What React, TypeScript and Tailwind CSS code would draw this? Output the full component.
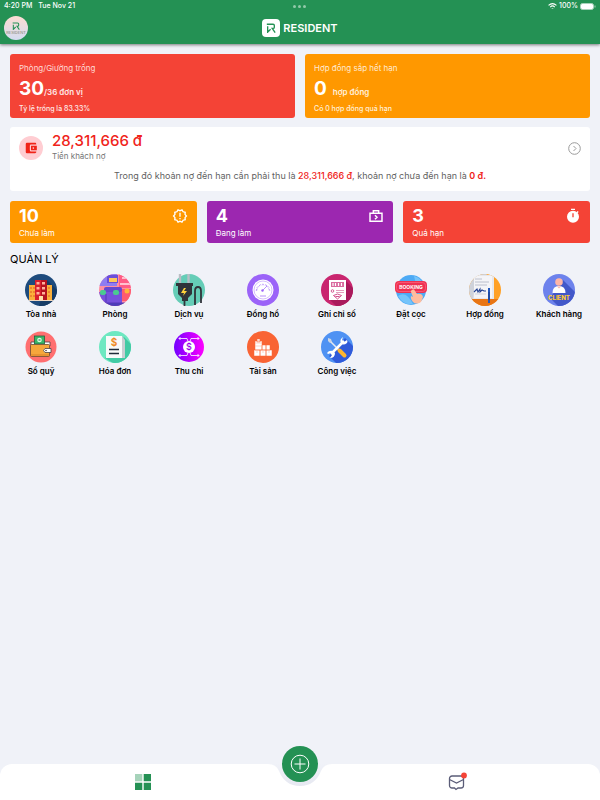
import React from "react";
import { MdAccountBalanceWallet, MdOutlineNewReleases } from "react-icons/md";

type IconProps = { children: React.ReactNode; bg: string; id: string };

const RoundIcon = ({ children, bg, id }: IconProps) => (
  <svg viewBox="0 0 32 32" className="h-8 w-8" aria-hidden="true">
    <defs>
      <clipPath id={id}>
        <circle cx="16" cy="16" r="16" />
      </clipPath>
    </defs>
    <g clipPath={`url(#${id})`}>
      <rect width="32" height="32" fill={bg} />
      {children}
    </g>
  </svg>
);

const BuildingIcon = () => (
  <RoundIcon id="building" bg="#1e4b7d">
    <path d="M22 6l10 10v16H14z" fill="#173c66" />
    <rect x="4" y="11" width="7" height="15" fill="#fbb03b" />
    <rect x="21" y="11" width="6" height="15" fill="#fbb03b" />
    <path d="M6 13v11M9 13v11M24 13v11" stroke="#e8792b" strokeWidth="1.500" strokeDasharray="2 2" />
    <rect x="10" y="6" width="6" height="20" fill="#d91e2e" />
    <rect x="16" y="6" width="6" height="20" fill="#b5121f" />
    <path d="M13 8v13M18.500 8v13" stroke="#ffb09a" strokeWidth="3" strokeDasharray="2.500 2.500" />
    <rect x="14" y="22" width="4" height="4" fill="#ffe0a8" />
    <path d="M3 26.500h26" stroke="#f3d9c0" />
  </RoundIcon>
);

const RoomIcon = () => (
  <RoundIcon id="room" bg="#ff8fa3">
    <path d="M0 0h18v12H0z" fill="#8f7df2" />
    <path d="M8 1h11v8H8z" fill="#6c4fd8" />
    <path d="M10 4h8v4h-8z" fill="#ffc85a" />
    <path d="M20 0h12v14H20z" fill="#ff5d86" />
    <path d="M23 4h7M21 10h10" stroke="#ffc2cf" strokeWidth="2" />
    <rect x="5" y="13" width="18" height="6" rx="2" fill="#6548cf" />
    <rect x="0" y="18" width="23" height="11" fill="#7751dd" />
    <rect x="1" y="16" width="6" height="5" rx="2" fill="#4acb91" />
    <rect x="14" y="16" width="6" height="5" rx="2" fill="#4acb91" />
    <path d="M0 29h32v3H0zM7 20v8" fill="#4b3fb8" stroke="#5638b7" />
    <path d="M23 15h9v12h-9z" fill="#ff5a70" />
    <circle cx="28" cy="17" r="2.500" fill="#ffb43c" />
  </RoundIcon>
);

const PlugIcon = () => (
  <svg viewBox="0 0 32 32" className="h-8 w-8" aria-hidden="true">
    <circle cx="16" cy="16" r="16" fill="#65cdb7" />
    <path d="M7 0v10M15.500 0v10" stroke="#b9bec5" strokeWidth="2.400" />
    <path d="M11.500 26v6M22 31V17q0-4 3-4t3 4v12" stroke="#30343a" strokeWidth="1.800" fill="none" />
    <path d="M3 9h17v3h-1v8l-4 4v3H9v-3l-4-4v-8H3z" fill="#30343a" />
    <path d="M11 14l-3 5h3l-1 3 4-5h-3l2-3z" fill="#ffd43b" />
  </svg>
);

const MeterIcon = () => (
  <RoundIcon id="meter" bg="#9b63f8">
    <circle cx="16" cy="16" r="10.500" fill="#fff" />
    <circle cx="16" cy="16" r="9" fill="none" stroke="#b892fa" strokeWidth="0.600" />
    <path d="M9.500 17a6.500 6.500 0 1 1 13 0" fill="none" stroke="#9b63f8" strokeWidth="1.400" strokeDasharray="0.500 1" />
    <path d="M15 17l5-5M13 22h6" stroke="#9b63f8" strokeWidth="0.700" />
    <circle cx="15.500" cy="16.500" r="1.200" fill="#9b63f8" />
  </RoundIcon>
);

const ReadingIcon = () => (
  <RoundIcon id="reading" bg="#c9256f">
    <path d="M24 6l8 8v18H15l-6-6z" fill="#a91a5c" />
    <rect x="8" y="6" width="17" height="20" fill="#fff" />
    <rect x="10" y="8" width="13" height="5" fill="#d96a9e" />
    <path d="M12 9v3M14.500 9v3M17.500 9v3M20.500 9v3" stroke="#fff" strokeWidth="1.200" />
    <circle cx="11.500" cy="17" r="1.300" fill="none" stroke="#c9256f" strokeWidth="0.700" />
    <path d="M15 16.500h8M15 18.500h8" stroke="#dd84ac" strokeWidth="0.800" />
    <path d="M12.500 21.500q4-3 8 0l-4 3.500zM14.500 22.500h4" fill="none" stroke="#c9256f" strokeWidth="0.800" />
  </RoundIcon>
);

const BookingIcon = () => (
  <svg viewBox="0 0 32 32" className="h-8 w-8" aria-hidden="true">
    <circle cx="16" cy="16" r="15" fill="#4daaf5" />
    <path d="M3 22q8-6 15 8-9 2-15-8M19 2q7 2 9 8h-7z" fill="#75c4fa" />
    <rect x="0" y="7" width="32" height="12" rx="4" fill="#ee3152" />
    <rect x="1.500" y="8.500" width="29" height="9" rx="3" fill="none" stroke="#ff7189" strokeWidth="0.600" />
    <text x="16" y="15" textAnchor="middle" fill="#fff" fontSize="5" fontWeight="700" fontFamily="Inter, sans-serif">BOOKING</text>
    <path d="M17 16q2-2 3 1l2 3q5-1 6 3l-2 5q-5 3-8 0-3-4-2-6l2 1-2-5q-1-1 1-2" fill="#ffbd9e" />
  </svg>
);

const ContractIcon = () => (
  <RoundIcon id="contract" bg="#ffa126">
    <path d="M0 0h18L5 25H0z" fill="#cfd2da" />
    <path d="M7 1h18v25H4z" fill="#e6e7ec" />
    <path d="M5 2h18v22H5z" fill="#f4f4f7" />
    <path d="M3 25h29v7H3z" fill="#e87515" />
    <path d="M6 5h7M6 8h14M6 11h12" stroke="#adb2c2" strokeWidth="0.800" />
    <path d="M5 18l3-3 1 3 2-3v3l2-2 2 1h2" fill="none" stroke="#244292" strokeWidth="1.100" />
    <path d="M6 20h11" stroke="#c0c3cd" strokeWidth="0.700" />
    <path d="M20 14v15" stroke="#2459bd" strokeWidth="2" />
    <path d="M20 18v8" stroke="#1a397f" strokeWidth="0.800" />
  </RoundIcon>
);

const ClientIcon = () => (
  <RoundIcon id="client" bg="#6d82ec">
    <path d="M20 6l12 12v14H15l-8-8z" fill="#4258c9" />
    <circle cx="16" cy="8" r="3.800" fill="#ffb5a6" />
    <path d="M9.500 19q0-7 6.500-7t6.500 7z" fill="#fff" />
    <path d="M14 12.500l2 2 2-2z" fill="#ffb5a6" />
    <text x="16" y="25.500" textAnchor="middle" fill="#ffcb32" fontSize="6" fontWeight="800" fontFamily="Inter, sans-serif">CLIENT</text>
  </RoundIcon>
);

const WalletIcon = () => (
  <svg viewBox="0 0 32 32" className="h-8 w-8" aria-hidden="true">
    <circle cx="16" cy="16" r="15.500" fill="#ff6f70" />
    <path d="M6 14v-3h19v4" fill="#fff" stroke="#484044" strokeWidth="0.800" />
    <rect x="9.500" y="5" width="10" height="8" fill="#3ab568" stroke="#265f3f" strokeWidth="0.800" />
    <circle cx="14.500" cy="9" r="2.300" fill="#d9ffe2" />
    <path d="M13.500 9h2" stroke="#265f3f" />
    <rect x="5.500" y="13.500" width="19" height="12" rx="1" fill="#f6a73b" stroke="#6d4b31" strokeWidth="0.800" />
    <path d="M6 24h18" stroke="#d97f27" />
    <path d="M26 17.500h-6q-3 2 0 4h6z" fill="#fff" stroke="#484044" strokeWidth="0.800" />
    <circle cx="21" cy="19.500" r="0.800" fill="#484044" />
  </svg>
);

const InvoiceIcon = () => (
  <RoundIcon id="invoice" bg="#6ee8c1">
    <path d="M25 6l7 7v19H14l-8-5z" fill="#42caa4" />
    <path d="M20 5h3l3 4v18h-6z" fill="#c9ced2" />
    <path d="M7 5h16v22H7z" fill="#f8fafa" />
    <text x="15" y="14.500" textAnchor="middle" fill="#ef8a26" fontSize="10" fontWeight="700" fontFamily="Inter, sans-serif">$</text>
    <path d="M10 18.500h10M10 22.500h10" stroke="#202b39" strokeWidth="1.300" />
  </RoundIcon>
);

const CashFlowIcon = () => (
  <svg viewBox="0 0 32 32" className="h-8 w-8" aria-hidden="true">
    <defs>
      <linearGradient id="cash">
        <stop stopColor="#7300ff" />
        <stop offset="1" stopColor="#ff00ff" />
      </linearGradient>
    </defs>
    <circle cx="16" cy="16" r="15" fill="url(#cash)" />
    <g fill="none" stroke="#fff" strokeWidth="0.800">
      <path d="M6 7.500h8l1 3M26 7.500h-8l-1 3M6 24.500h8l1-3M26 24.500h-8l-1-3M7.500 6L6 7.500 7.500 9M24.500 6L26 7.500 24.500 9M7.500 23L6 24.500 7.500 26M24.500 23l1.500 1.500-1.500 1.500" />
    </g>
    <circle cx="16" cy="16" r="6" fill="#fff" />
    <text x="16" y="19.200" textAnchor="middle" fill="#9200e6" fontSize="9" fontWeight="500" fontFamily="Inter, sans-serif">$</text>
  </svg>
);

const AssetIcon = () => (
  <RoundIcon id="asset" bg="#f96434">
    <g fill="#fff" stroke="#f96434" strokeWidth="0.500">
      <path d="M8 10h7v9H8zM7 19h6v6H7zM13 19h6v6h-6zM19 19h6v6h-6zM15 14h4v5h-4zM19 14h4v5h-4zM10 8h3v3h-3z" />
    </g>
    <path d="M8 12h7M8 15h7M10 20v2M16 20v2M22 20v2" stroke="#fbb59e" strokeWidth="0.600" />
  </RoundIcon>
);

const WorkIcon = () => (
  <RoundIcon id="work" bg="#4f92f3">
    <path d="M24 7l8 8v17H15l-7-7z" fill="#315bd9" />
    <path d="M8 9l11 11" stroke="#e4eaf2" strokeWidth="1.500" />
    <path d="M7 7l3 1 1 3-2 1-2-2z" fill="#cbd6e5" />
    <path d="M18.500 19.500l5 5" stroke="#ffb52f" strokeWidth="4" strokeLinecap="round" />
    <path d="M10 23l13-13" stroke="#fff" strokeWidth="2.500" />
    <path d="M22 6q-4 3-2 6t6 0q1-1 0-3l-3 2-2-2zM12 20q-4-1-6 2l1 1 3-1 1 2-2 3q5 0 5-5z" fill="#fff" />
  </RoundIcon>
);

const CaseIcon = () => (
  <svg viewBox="0 0 24 24" className="h-4 w-4" fill="none" stroke="currentColor" strokeWidth="2.200" aria-hidden="true">
    <path d="M3 8h18v12H3zM8 8V4h8v4M10.500 11l3 3-3 3" />
  </svg>
);

const TimerIcon = () => (
  <svg viewBox="0 0 24 24" className="h-4 w-4" fill="currentColor" aria-hidden="true">
    <path d="M9 1h6v2H9zM19 4.500l1.500 1.500-2 2L17 6.500z" />
    <path fillRule="evenodd" d="M12 4a9 9 0 1 0 0 18 9 9 0 0 0 0-18zm-1 4h2v6h-2z" />
  </svg>
);

const LogoMark = ({ className }: { className: string }) => (
  <svg viewBox="0 0 12 12" className={className} fill="none" stroke="currentColor" strokeWidth="1.600" aria-hidden="true">
    <path d="M1 1.500h7.500q1.500 0 1.500 1.500v2q0 1.500-1.500 1.500H7.500L11 11.500M2 4v7l3.500-3.500" />
  </svg>
);

const tasks = [
  { count: 10, label: "Chưa làm", style: "bg-[#ff9800]", icon: <MdOutlineNewReleases className="h-4 w-4" /> },
  { count: 4, label: "Đang làm", style: "bg-[#9c27b0]", icon: <CaseIcon /> },
  { count: 3, label: "Quá hạn", style: "bg-[#f44336]", icon: <TimerIcon /> },
];

const menus = [
  { label: "Tòa nhà", icon: <BuildingIcon /> },
  { label: "Phòng", icon: <RoomIcon /> },
  { label: "Dịch vụ", icon: <PlugIcon /> },
  { label: "Đồng hồ", icon: <MeterIcon /> },
  { label: "Ghi chỉ số", icon: <ReadingIcon /> },
  { label: "Đặt cọc", icon: <BookingIcon /> },
  { label: "Hợp đồng", icon: <ContractIcon /> },
  { label: "Khách hàng", icon: <ClientIcon /> },
  { label: "Sổ quỹ", icon: <WalletIcon /> },
  { label: "Hóa đơn", icon: <InvoiceIcon /> },
  { label: "Thu chi", icon: <CashFlowIcon /> },
  { label: "Tài sản", icon: <AssetIcon /> },
  { label: "Công việc", icon: <WorkIcon /> },
];

const App = () => {
  return (
    <div className="flex min-h-screen flex-col bg-[#f0f2f8] font-['Inter',sans-serif] text-black">
      {/* Header */}
      <header className="bg-[#249154] text-white shadow-[0_1px_3px_rgba(0,0,0,0.5)]">
        <div className="grid h-3 grid-cols-3 items-center px-1 text-[7px] leading-3 font-medium">
          <div className="flex gap-1.5">
            <span>4:20 PM</span>
            <span>Tue Nov 21</span>
          </div>
          <div className="flex justify-center gap-0.5 text-[#91c9a9]">
            <span className="h-[3px] w-[3px] rounded-full bg-current" />
            <span className="h-[3px] w-[3px] rounded-full bg-current" />
            <span className="h-[3px] w-[3px] rounded-full bg-current" />
          </div>
          <div className="flex items-center justify-end gap-0.5">
            <svg viewBox="0 0 16 12" className="h-[7px] w-[9px]" fill="none" stroke="currentColor" strokeWidth="2" aria-hidden="true">
              <path d="M1 4q7-6 14 0M4 7q4-4 8 0" />
              <path d="M8 9.500v1" strokeWidth="3" />
            </svg>
            <span>100%</span>
            <svg viewBox="0 0 16 7" className="h-[7px] w-4" aria-hidden="true">
              <rect x="0.500" y="0.500" width="13" height="6" rx="2" fill="#fff" stroke="#a7d3ba" />
              <path d="M15 2.500v2" stroke="#a7d3ba" />
            </svg>
          </div>
        </div>
        <div className="grid h-8 grid-cols-3 items-center px-1">
          <button
            type="button"
            aria-label="Resident"
            className="flex h-6 w-6 flex-col items-center justify-center rounded-full bg-linear-to-b from-[#fbdcd2] to-[#d3dcf0] text-[#249154]"
          >
            <LogoMark className="h-2 w-2" />
            <span className="text-[4px] leading-[5px] text-[#858574]">RESIDENT</span>
          </button>
          <div className="flex items-center justify-center gap-[3px]">
            <span className="flex h-[18px] w-[18px] items-center justify-center rounded bg-white text-[#249154]">
              <LogoMark className="h-[10px] w-[10px]" />
            </span>
            <span className="text-[11px] leading-4 font-semibold">RESIDENT</span>
          </div>
        </div>
      </header>

      <main className="flex-1 px-[10px] pt-[10px]">
        {/* Rooms and contracts */}
        <div className="grid grid-cols-2 gap-[10px] text-white">
          <section className="h-16 rounded-[3px] bg-[#f44336] px-[9px] pt-2">
            <h2 className="text-[8px] leading-3 text-[#ffd9d5]">Phòng/Giường trống</h2>
            <p className="mt-[3px] flex h-6 items-baseline text-[8px] leading-6 font-semibold text-[#ffe9e7]">
              <span className="text-[19px] font-bold text-white">30</span>/36 đơn vị
            </p>
            <p className="mt-0.5 text-[7px] leading-3 font-medium text-[#ffe9e7]">Tỷ lệ trống là 83.33%</p>
          </section>
          <section className="h-16 rounded-[3px] bg-[#ff9800] px-[9px] pt-2">
            <h2 className="text-[8px] leading-3 text-[#ffead0]">Hợp đồng sắp hết hạn</h2>
            <p className="mt-[3px] flex h-6 items-baseline gap-1.5 text-[8px] leading-6 font-semibold text-[#fff0db]">
              <span className="text-[19px] font-bold text-white">0</span> hợp đồng
            </p>
            <p className="mt-0.5 text-[7px] leading-3 font-medium text-[#fff0db]">Có 0 hợp đồng quá hạn</p>
          </section>
        </div>

        {/* Debt */}
        <section className="mt-[9px] h-16 rounded-[3px] bg-white px-[9px] pt-[3px]">
          <div className="flex h-9 items-center">
            <span className="flex h-6 w-6 items-center justify-center rounded-full bg-[#ffcdd2] text-[#f02419]">
              <MdAccountBalanceWallet className="h-[14px] w-[14px]" />
            </span>
            <div className="ml-[9px] flex-1 pb-[3px]">
              <p className="text-[15px] leading-[18px] font-medium text-[#f0231a]">28,311,666 đ</p>
              <p className="text-[8px] leading-3 text-[#757575]">Tiền khách nợ</p>
            </div>
            <button type="button" aria-label="Xem tiền khách nợ" className="text-[#9b9b9b]">
              <svg viewBox="0 0 13 13" className="h-[13px] w-[13px]" fill="none" stroke="currentColor" aria-hidden="true">
                <circle cx="6.500" cy="6.500" r="5.800" />
                <path d="M5.500 4l2.500 2.500L5.500 9" />
              </svg>
            </button>
          </div>
          <p className="mt-1 text-center text-[9px] leading-3 text-[#5f5f5f]">
            Trong đó khoản nợ đến hạn cần phải thu là <b className="font-medium text-[#f0231a]">28,311,666 đ</b>, khoản nợ chưa đến hạn là{" "}
            <b className="font-semibold text-[#f0231a]">0 đ.</b>
          </p>
        </section>

        {/* Tasks */}
        <div className="mt-[10px] grid grid-cols-3 gap-[10px] text-white">
          {tasks.map((task) => (
            <a key={task.label} href="#" className={`block h-[42px] rounded-[3px] px-[9px] pt-[7px] ${task.style}`}>
              <span className="flex h-4 items-center justify-between text-[18px] leading-4 font-bold">
                {task.count}
                {task.icon}
              </span>
              <span className="mt-[3px] block text-[8px] leading-3">{task.label}</span>
            </a>
          ))}
        </div>

        {/* Menu */}
        <h2 className="mt-2 text-[11px] leading-4">QUẢN LÝ</h2>
        <nav className="-mx-[6px] mt-[7px] grid grid-cols-8 gap-y-[11px]">
          {menus.map((menu) => (
            <a key={menu.label} href="#" className="flex flex-col items-center">
              {menu.icon}
              <span className="mt-0.5 text-[8px] leading-3 font-semibold whitespace-nowrap">{menu.label}</span>
            </a>
          ))}
        </nav>
      </main>

      {/* Bottom bar */}
      <nav className="relative grid h-9 grid-cols-[1fr_28px_1fr] items-center justify-items-center rounded-t-xl bg-white">
        <button type="button" aria-label="Trang chủ">
          <svg viewBox="0 0 16 16" className="h-4 w-4" fill="#249154" aria-hidden="true">
            <path d="M0 0h7.300v7.300H0z" fill="#a6d3ba" />
            <path d="M8.700 0H16v7.300H8.700zM0 8.700h7.300V16H0zM8.700 8.700H16V16H8.700z" />
          </svg>
        </button>
        <svg viewBox="0 0 64 24" className="absolute top-0 left-1/2 h-6 w-16 -translate-x-1/2" aria-hidden="true">
          <defs>
            <linearGradient id="notch" x2="0" y2="1">
              <stop stopColor="#f0f2f8" />
              <stop offset="1" stopColor="#e6e8f1" />
            </linearGradient>
          </defs>
          <path d="M0 0q8 0 11 7Q17 22 32 22t21-15Q56 0 64 0z" fill="url(#notch)" />
        </svg>
        <button
          type="button"
          aria-label="Thêm mới"
          className="absolute -top-[18px] left-1/2 flex h-9 w-9 -translate-x-1/2 items-center justify-center rounded-full bg-[#249154] text-white"
        >
          <svg viewBox="0 0 20 20" className="h-5 w-5" fill="none" stroke="currentColor" aria-hidden="true">
            <circle cx="10" cy="10" r="8.800" />
            <path d="M10 4.500v11M4.500 10h11" />
          </svg>
        </button>
        <button type="button" aria-label="Tin nhắn" className="col-start-3">
          <svg viewBox="0 0 20 20" className="h-5 w-5" fill="none" stroke="#5b5d78" strokeWidth="1.300" aria-hidden="true">
            <path d="M5 4h9a2.500 2.500 0 0 1 2.500 2.500v7A2.500 2.500 0 0 1 14 16h-3l-2 1.500L7.500 16H5a2.500 2.500 0 0 1-2.500-2.500v-7A2.500 2.500 0 0 1 5 4zM2.500 7.500l7 3.500 7-3.500" />
            <circle cx="17" cy="3.500" r="2.900" fill="#f44336" stroke="none" />
          </svg>
        </button>
      </nav>
    </div>
  );
};

export default App;
